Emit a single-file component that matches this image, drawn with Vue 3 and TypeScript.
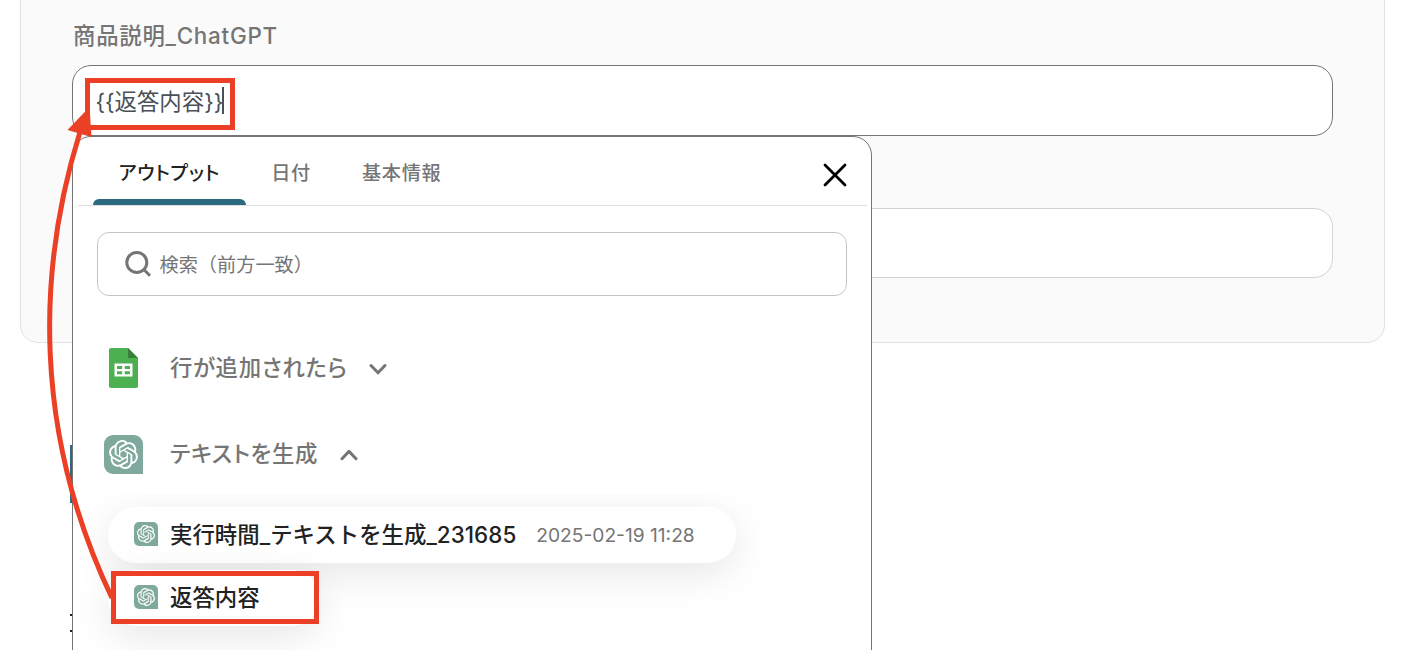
<script setup lang="ts">
import { ref } from 'vue'

interface OutputItem {
  name: string
  date?: string
}

const fieldValue = ref('{{返答内容}}')
const activeTab = ref(0)
const generateOpen = ref(true)

const tabs = ['アウトプット', '日付', '基本情報']

const outputs: OutputItem[] = [
  { name: '実行時間_テキストを生成_231685', date: '2025-02-19 11:28' },
  { name: '返答内容' }
]

const knot =
  'M22.2819 9.8211a5.9847 5.9847 0 0 0-.5157-4.9108 6.0462 6.0462 0 0 0-6.5098-2.9A6.0651 6.0651 0 0 0 4.9807 4.1818a5.9847 5.9847 0 0 0-3.9977 2.9 6.0462 6.0462 0 0 0 .7427 7.0966 5.98 5.98 0 0 0 .511 4.9107 6.051 6.051 0 0 0 6.5146 2.9001A5.9847 5.9847 0 0 0 13.2599 24a6.0557 6.0557 0 0 0 5.7718-4.2058 5.9894 5.9894 0 0 0 3.9977-2.9001 6.0557 6.0557 0 0 0-.7475-7.0729zm-9.022 12.6081a4.4755 4.4755 0 0 1-2.8764-1.0408l.1419-.0804 4.7783-2.7582a.7948.7948 0 0 0 .3927-.6813v-6.7369l2.02 1.1686a.071.071 0 0 1 .038.052v5.5826a4.504 4.504 0 0 1-4.4945 4.4944zm-9.6607-4.1254a4.4708 4.4708 0 0 1-.5346-3.0137l.142.0852 4.783 2.7582a.7712.7712 0 0 0 .7806 0l5.8428-3.3685v2.3324a.0804.0804 0 0 1-.0332.0615L9.74 19.9502a4.4992 4.4992 0 0 1-6.1408-1.6464zM2.3408 7.8956a4.485 4.485 0 0 1 2.3655-1.9728V11.6a.7664.7664 0 0 0 .3879.6765l5.8144 3.3543-2.0201 1.1685a.0757.0757 0 0 1-.071 0l-4.8303-2.7865A4.504 4.504 0 0 1 2.3408 7.872zm16.5963 3.8558L13.1038 8.364 15.1192 7.2a.0757.0757 0 0 1 .071 0l4.8303 2.7913a4.4944 4.4944 0 0 1-.6765 8.1042v-5.6772a.79.79 0 0 0-.407-.667zm2.0107-3.0231l-.142-.0852-4.7735-2.7818a.7759.7759 0 0 0-.7854 0L9.409 9.2297V6.8974a.0662.0662 0 0 1 .0284-.0615l4.8303-2.7866a4.4992 4.4992 0 0 1 6.6802 4.66zM8.3065 12.863l-2.02-1.1638a.0804.0804 0 0 1-.038-.0567V6.0742a4.4992 4.4992 0 0 1 7.3757-3.4537l-.142.0805L8.704 5.459a.7948.7948 0 0 0-.3927.6813zm1.0976-2.3654l2.602-1.4998 2.6069 1.4998v2.9994l-2.5974 1.4997-2.6067-1.4997Z'
</script>

<template>
  <div class="page">
    <section class="form-card">
      <p class="field-label">商品説明_ChatGPT</p>
      <div class="field focused">
        <span class="field-value">{{ fieldValue }}</span>
        <span class="caret"></span>
      </div>
      <div class="field second"></div>
    </section>

    <div class="behind-button"></div>
    <div class="behind-text"></div>

    <div class="picker">
      <header class="picker-header">
        <nav class="tabs">
          <button
            v-for="(tab, i) in tabs"
            :key="tab"
            class="tab"
            :class="{ active: i === activeTab }"
            @click="activeTab = i"
          >
            {{ tab }}
          </button>
        </nav>
        <svg class="close" viewBox="0 0 24 24">
          <path d="M2 2L22 22M22 2L2 22" />
        </svg>
      </header>

      <div class="search">
        <svg class="search-icon" viewBox="0 0 28 28">
          <circle cx="12.8" cy="12.4" r="10" />
          <path d="M19.8 19.5L26 25.7" />
        </svg>
        <span class="search-text">検索（前方一致）</span>
      </div>

      <div class="group">
        <svg class="sheet-icon" viewBox="0 0 29 40">
          <path d="M2 0H19L29 10V38a2 2 0 0 1-2 2H2a2 2 0 0 1-2-2V2a2 2 0 0 1 2-2z" fill="#4caf50" />
          <path d="M19 0L29 10H19z" fill="#388038" />
          <path d="M5.5 15.5h18v13h-18zM8 18v3h5.2v-3zM15.7 18v3h5.3v-3zM8 23.3v3h5.2v-3zM15.7 23.3v3h5.3v-3z" fill="#fff" fill-rule="evenodd" />
        </svg>
        <span class="group-name">行が追加されたら</span>
        <svg class="chevron" viewBox="0 0 18 12">
          <path d="M2 2.5L9 9.8L16 2.5" />
        </svg>
      </div>

      <div class="group generate" @click="generateOpen = !generateOpen">
        <span class="gpt-icon">
          <svg viewBox="0 0 24 24"><path :d="knot" /></svg>
        </span>
        <span class="group-name">テキストを生成</span>
        <svg class="chevron" viewBox="0 0 18 12">
          <path d="M2 9.7L9 2.4L16 9.7" />
        </svg>
      </div>

      <div v-if="generateOpen" class="outputs">
        <div v-for="item in outputs" :key="item.name" class="output">
          <span class="gpt-icon small">
            <svg viewBox="0 0 24 24"><path :d="knot" /></svg>
          </span>
          <span class="output-name">{{ item.name }}</span>
          <span v-if="item.date" class="output-date">{{ item.date }}</span>
        </div>
      </div>
    </div>

    <div class="marker marker-field"></div>
    <div class="marker marker-output"></div>
    <svg class="arrow" viewBox="0 0 1424 650">
      <path class="arrow-line" d="M112 598C33 432 37 270 80 132" />
      <path class="arrow-head" d="M89.5 107L67.5 130L91.5 137z" />
    </svg>
  </div>
</template>

<style>
body {
  margin: 0;
  background: #fff;
}
</style>

<style scoped>
.page {
  position: relative;
  width: 1424px;
  height: 650px;
  overflow: hidden;
  background: #fff;
  font-family: Inter, 'Noto Sans CJK JP', sans-serif;
  color: #757575;
}

.form-card {
  box-sizing: border-box;
  width: 1365px;
  height: 363px;
  margin: -20px 0 0 20px;
  padding: 39px 51px 0;
  background: #fafafa;
  border: 1px solid #dee2e6;
  border-radius: 18px;
}

.field-label {
  margin: 0 0 13px 1px;
  font-size: 22.4px;
  line-height: 32px;
  font-weight: 500;
  letter-spacing: 0.75px;
}

.field {
  box-sizing: border-box;
  display: flex;
  align-items: center;
  width: 1261px;
  height: 70px;
  padding-left: 22.5px;
  background: #fff;
  border: 1px solid #ced4da;
  border-radius: 19px;
}

.field.focused {
  height: 71px;
  border-color: #757575;
}

.field.second {
  margin-top: 72px;
}

.field-value {
  margin-top: -2px;
  font-size: 22.4px;
  color: #495057;
}

.caret {
  width: 2px;
  height: 27px;
  margin-left: -1px;
  background: #495057;
}

.behind-button {
  position: absolute;
  left: 70px;
  top: 445px;
  width: 30px;
  height: 58px;
  background: #2c6a80;
}

.behind-text {
  position: absolute;
  left: 70px;
  top: 614px;
  width: 3px;
  height: 14px;
  border-top: 2px solid #222;
  border-bottom: 2px solid #222;
}

.picker {
  position: absolute;
  left: 72px;
  top: 136px;
  box-sizing: border-box;
  width: 800px;
  height: 560px;
  background: #fff;
  border: 1px solid #757575;
  border-radius: 19px;
}

.picker-header {
  display: flex;
  justify-content: space-between;
  height: 68px;
  margin: 0 4px 0 5px;
  padding: 0 20px 0 15px;
  border-bottom: 1px solid #dfdfdf;
}

.tabs {
  display: flex;
}

.tab {
  position: relative;
  padding: 3px 25.6px 0;
  border: 0;
  background: none;
  color: #757575;
  font-family: inherit;
  font-size: 19.2px;
  font-weight: 500;
  letter-spacing: 0.65px;
  line-height: 67px;
  font-feature-settings: 'palt';
}

.tab.active {
  color: #222;
}

.tab.active::after {
  content: '';
  position: absolute;
  left: 0;
  right: 0;
  bottom: 0;
  height: 6px;
  background: #2c6a80;
  border-radius: 6px 6px 0 0;
}

.close {
  width: 24px;
  height: 24px;
  margin-top: 26px;
  stroke: #000;
  stroke-width: 2.8;
  stroke-linecap: round;
}

.search {
  box-sizing: border-box;
  display: flex;
  align-items: center;
  width: 750px;
  height: 64px;
  margin: 26px 0 0 24px;
  padding-left: 26px;
  border: 1px solid #c4c4c4;
  border-radius: 12px;
}

.search-icon {
  width: 28px;
  height: 28px;
  margin-top: -1px;
  fill: none;
  stroke: #757575;
  stroke-width: 3;
}

.search-text {
  margin-left: 7.5px;
  font-size: 19.2px;
}

.group {
  display: flex;
  align-items: center;
  height: 40px;
  margin: 52px 0 0 36px;
}

.group.generate {
  margin: 46px 0 0 31px;
}

.sheet-icon {
  width: 29px;
  height: 40px;
}

.group-name {
  margin: -4px 22px 0 32px;
  font-size: 22.4px;
  font-weight: 500;
  letter-spacing: 0.65px;
  font-feature-settings: 'palt';
}

.generate .group-name {
  margin-left: 27px;
}

.chevron {
  width: 18px;
  height: 12px;
  margin-top: 2px;
  fill: none;
  stroke: #757575;
  stroke-width: 3;
  stroke-linecap: round;
  stroke-linejoin: round;
}

.gpt-icon {
  display: flex;
  align-items: center;
  justify-content: center;
  width: 39px;
  height: 39px;
  background: #80a99d;
  border-radius: 9px 9px 0 9px;
}

.gpt-icon svg {
  width: 29px;
  height: 29px;
  fill: #fff;
}

.gpt-icon.small {
  width: 24px;
  height: 24px;
  border-radius: 5px 5px 0 5px;
}

.gpt-icon.small svg {
  width: 18px;
  height: 18px;
}

.outputs {
  display: flex;
  flex-direction: column;
  align-items: flex-start;
  gap: 7px;
  margin-top: 20px;
  padding: 13px 35px 0;
  overflow: hidden;
  height: 190px;
}

.output {
  box-sizing: border-box;
  display: flex;
  align-items: center;
  height: 56px;
  min-width: 212px;
  padding: 0 41px 2px 26px;
  background: #fff;
  border-radius: 28px;
  box-shadow: 0 10px 40px rgba(0, 0, 0, 0.1);
}

.output-name {
  margin: -2px 0 0 12px;
  color: #222;
  font-size: 22.4px;
  font-weight: 500;
  letter-spacing: 0.04px;
}

.output-date {
  margin: 1px 0 0 20px;
  font-size: 19.2px;
}

.marker {
  position: absolute;
  box-sizing: border-box;
  border: 5px solid #eb4026;
}

.marker-field {
  left: 85px;
  top: 78px;
  width: 150px;
  height: 52px;
}

.marker-output {
  left: 111px;
  top: 571px;
  width: 208px;
  height: 53px;
}

.arrow {
  position: absolute;
  left: 0;
  top: 0;
  width: 1424px;
  height: 650px;
  pointer-events: none;
}

.arrow-line {
  fill: none;
  stroke: #eb4026;
  stroke-width: 5;
}

.arrow-head {
  fill: #eb4026;
}
</style>
